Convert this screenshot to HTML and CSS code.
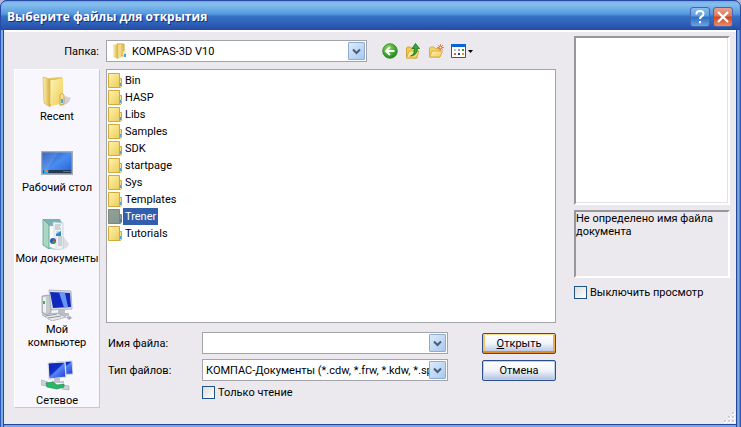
FILE: index.html
```html
<!DOCTYPE html>
<html lang="ru">
<head>
  <meta charset="UTF-8">
  <meta name="viewport" content="width=device-width, initial-scale=1.0">
  <title>Выберите файлы для открытия</title>
  <link rel="stylesheet" href="styles.css">
</head>
<body>
  <svg class="defs" width="0" height="0" aria-hidden="true">
    <defs>
      <linearGradient id="yellow" x1="0" y1="0" x2="1" y2="1">
        <stop offset="0" stop-color="#fdf4b0"/>
        <stop offset="1" stop-color="#eecb58"/>
      </linearGradient>
      <linearGradient id="gold" x1="0" y1="0" x2="1" y2="0">
        <stop offset="0" stop-color="#fff3b0"/>
        <stop offset="1" stop-color="#d9ae42"/>
      </linearGradient>
      <linearGradient id="grey" x1="0" y1="0" x2="1" y2="1">
        <stop offset="0" stop-color="#8f9f99"/>
        <stop offset="1" stop-color="#8b9a8e"/>
      </linearGradient>
      <linearGradient id="screen" x1="0" y1="0" x2="1" y2="1">
        <stop offset="0" stop-color="#1c4fb4"/>
        <stop offset=".5" stop-color="#4a8cf0"/>
        <stop offset="1" stop-color="#1f5dd0"/>
      </linearGradient>
      <linearGradient id="monitor" x1="0" y1="0" x2="1" y2="1">
        <stop offset="0" stop-color="#0a1fb0"/>
        <stop offset=".45" stop-color="#1230cc"/>
        <stop offset=".5" stop-color="#5a86f4"/>
        <stop offset="1" stop-color="#1a3ad2"/>
      </linearGradient>
      <radialGradient id="green" cx=".4" cy=".3" r=".7">
        <stop offset="0" stop-color="#8bd860"/>
        <stop offset="1" stop-color="#1f8a1c"/>
      </radialGradient>
      <symbol id="folder" viewBox="0 0 15 16">
        <path d="M.5.5h11v14H.5z" fill="url(#yellow)" stroke="#d2a93c"/>
        <path d="M11.5 5.5h2v8l-1 1h-1z" fill="#f6df8a" stroke="#cfa640"/>
        <path d="M12 10h1v3h-1z" fill="#4aa3d8"/>
      </symbol>
      <symbol id="folder-selected" viewBox="0 0 15 16">
        <path d="M.5.5h11v14H.5z" fill="url(#grey)" stroke="#7c8878"/>
        <path d="M11.5 5.5h2v8l-1 1h-1z" fill="#8795a0" stroke="#7b8474"/>
        <path d="M12 10h1v3h-1z" fill="#3b7fc4"/>
      </symbol>
      <symbol id="chevron" viewBox="0 0 9 7">
        <path d="M1 1.500l3.500 3.500L8 1.500" fill="none" stroke="#4a5b7c" stroke-width="2"/>
      </symbol>
    </defs>
  </svg>

  <main class="window">
    <header class="titlebar">
      <h1>Выберите файлы для открытия</h1>
      <button class="caption help" aria-label="Справка">
        <svg width="18" height="18" viewBox="0 0 18 18"><path d="M5.500 6.500V5.500Q5.500 3 9 3t3.500 2.700Q12.500 7.500 10.500 8.500 9 9.300 9 11M9 13v2.200" fill="none" stroke="#fff" stroke-width="2"/></svg>
      </button>
      <button class="caption close" aria-label="Закрыть">
        <svg width="18" height="18" viewBox="0 0 18 18"><path d="M4 4l10 10M14 4L4 14" fill="none" stroke="#fff" stroke-width="2.400"/></svg>
      </button>
    </header>

    <div class="content">
      <section class="browser">
        <div class="toolbar">
          <label class="folder-label" for="folder-select">Папка:</label>
          <div class="combo folder-combo">
            <svg class="combo-icon" width="13" height="16" viewBox="0 0 13 16">
              <path d="M4 1h7v12H4z" fill="#e9c65c" stroke="#cda63e"/>
              <path d="M0 1l5 1v14l-5-2z" fill="url(#gold)"/>
              <path d="M5 2l3-1v13l-3 2z" fill="#f2db86"/>
              <path d="M10 8h2.500v6H10z" fill="#f6e39c"/>
              <path d="M11 11h2v3h-2z" fill="#42a3dc"/>
            </svg>
            <select id="folder-select"><option>KOMPAS-3D V10</option></select>
            <span class="arrow"><svg width="9" height="7"><use href="#chevron"/></svg></span>
          </div>
          <div class="tools">
            <button class="tool" aria-label="Назад">
              <svg width="16" height="16" viewBox="0 0 16 16">
                <circle cx="8" cy="8" r="7.300" fill="url(#green)" stroke="#2b8a26" stroke-width=".8"/>
                <path d="M12.500 8H4.500M8 4L4 8l4 4" fill="none" stroke="#fff" stroke-width="2"/>
              </svg>
            </button>
            <button class="tool" aria-label="На уровень вверх">
              <svg width="16" height="16" viewBox="0 0 16 16">
                <path d="M1.500 15V5l1-1h3l1 1.500H12V15z" fill="#f0cc55" stroke="#d2a336"/>
                <path d="M1.500 15L4 8h10l-2.500 7z" fill="url(#yellow)" stroke="#d9ae42"/>
                <path d="M5.500 13C9 12 9.500 9 9.300 5.500H7L10.500.5l4 5h-2.300c.3 4-1.700 7-6.700 7.500z" fill="#35a935" stroke="#187018" stroke-width=".8"/>
              </svg>
            </button>
            <button class="tool" aria-label="Создать папку">
              <svg width="16" height="16" viewBox="0 0 16 16">
                <path d="M1.500 14V5l1-1h3.500l1 1.500h5V14z" fill="#f3d468" stroke="#d9ae42"/>
                <path d="M1.500 14L4 8h10.500L12 14z" fill="url(#yellow)" stroke="#d9ae42"/>
                <path d="M12.500 1v7M9 4.500h7M10 2l5 5M15 2l-5 5" stroke="#f08a50"/>
                <circle cx="12.500" cy="4.500" r="1.500" fill="#fff0a0" stroke="#e8582c"/>
              </svg>
            </button>
            <button class="tool views" aria-label="Вид">
              <svg width="23" height="16" viewBox="0 0 23 16">
                <path d="M.5 1.500h14v13H.5z" fill="#fff" stroke="#0a5ad0"/>
                <path d="M0 1h15v3H0z" fill="#0a62dc"/>
                <path d="M3 6h2v2H3z" fill="#b4c4dc"/>
                <path d="M7 6h2v2H7z" fill="#8898c8"/>
                <path d="M11 6h2v2h-2z" fill="#3a9a3a"/>
                <path d="M3 10h2v2H3z" fill="#d86848"/>
                <path d="M7 10h2v2H7z" fill="#283c98"/>
                <path d="M11 10h2v2h-2z" fill="#d0a020"/>
                <path d="M17 7h5l-2.500 3z" fill="#000"/>
              </svg>
            </button>
          </div>
        </div>

        <div class="columns">
          <nav class="places">
            <button class="place">
              <svg width="32" height="32" viewBox="0 0 32 32">
                <path d="M18 30q9 0 12-8l-6-2z" fill="#b8b8be" opacity=".6"/>
                <path d="M9 2l12-1v26l-12 3z" fill="#e5c35a"/>
                <path d="M9 4h10v24H9z" fill="#f8eda8"/>
                <path d="M2 1l7 2v28l-6-4z" fill="url(#gold)" stroke="#d3ad4a" stroke-width=".6"/>
                <path d="M10 5l12-3v25l-12 3z" fill="url(#yellow)"/>
                <path d="M19 19l2-2 2 2v9l-4 1z" fill="#f4df93" stroke="#c8a03a" stroke-width=".8"/>
                <path d="M20 23h2v4h-2z" fill="#50a8d8"/>
              </svg>
              <span>Recent</span>
            </button>
            <button class="place">
              <svg width="32" height="32" viewBox="0 0 32 32">
                <path d="M.7 4.700h30.600v22.600H.7z" fill="url(#screen)" stroke="#a6aebc" stroke-width="1.400"/>
                <path d="M2 6h15L6 23H2z" fill="#fff" opacity=".12"/>
                <path d="M2 23h28v3H2z" fill="#25384f"/>
                <circle cx="5" cy="24" r="2.500" fill="#29a9e8"/>
                <path d="M4 22h2v2H4z" fill="#f48028"/><path d="M5 24h2v1H5z" fill="#7cc840"/>
                <path d="M22 24h8v1h-8z" fill="#5a6d80"/>
              </svg>
              <span>Рабочий стол</span>
            </button>
            <button class="place">
              <svg width="32" height="32" viewBox="0 0 32 32">
                <path d="M20 31q7 0 8-5l-6-8z" fill="#c4c4cc" opacity=".5"/>
                <path d="M2 1h17l2 4v24l-12 2-7-4z" fill="#7bb3b4"/>
                <path d="M12 4l10 1v26l-10 1z" fill="#eef2f5" stroke="#b7c5cd" stroke-width=".6"/>
                <path d="M14 7h6M14 9h5M14 11h6M17 19h4M17 21h4M17 23h4M17 25h4M17 27h4" stroke="#a5b3bd"/>
                <path d="M15 13h5v5h-5z" fill="#2c8cc0"/><path d="M15 13h5l-5 3z" fill="#c4dce8"/>
                <path d="M8 8h5v10l2 2v11l-7-2z" fill="#f9fafc" stroke="#c0cad0" stroke-width=".5"/>
                <circle cx="12" cy="23" r="3" fill="#2854b4"/>
                <path d="M12 23h3a3 3 0 0 1-5 2z" fill="#30a050"/><path d="M12 20v3h3z" fill="#d04848"/>
                <path d="M2 1l6 6v24l-6-4z" fill="#a8d8c0" stroke="#5f9c9a" stroke-width=".8"/>
              </svg>
              <span>Мои документы</span>
            </button>
            <button class="place">
              <svg width="32" height="32" viewBox="0 0 32 32">
                <path d="M1 7l6-1 3 2v16l-4 2-5-2z" fill="#c6cbd0" stroke="#8c9298" stroke-width=".7"/>
                <path d="M2 8l3 .5V24l-3-1z" fill="#eef0f2"/><path d="M2 12h2v3H2z" fill="#42b83c"/>
                <path d="M8 1l22 1 1 18-21 1z" fill="#d9dce0" stroke="#9ba2aa" stroke-width=".7"/>
                <path d="M9 3l20 1 1 14-18 1z" fill="#1028bc"/>
                <path d="M18 3.500l6 .3 3 14.400-4 .3z" fill="#6c94f4"/>
                <path d="M17 21h7v3h4v3H15v-3h2z" fill="#b9bec6"/>
                <path d="M1 26l15-2 9 4-14 4z" fill="#e8eaec" stroke="#9ca2a8" stroke-width=".7"/>
                <path d="M4 27l12-2M7 29l13-2" stroke="#8e959e"/>
                <path d="M25 28l4-1 2 2-3 2z" fill="#a7adb5"/>
              </svg>
              <span>Мой<br>компьютер</span>
            </button>
            <button class="place">
              <svg width="32" height="32" viewBox="0 0 32 32">
                <path d="M15 2l16-1 1 13-15 1z" fill="url(#monitor)" stroke="#d5d9df"/>
                <path d="M7 3l17-1 1 15-17 2z" fill="url(#monitor)" stroke="#dfe3e8" stroke-width="1.200"/>
                <path d="M13 18h6v3h4v2H11v-2h2z" fill="#c0c5cc"/>
                <path d="M0 20l7 2-1 4-6-1zM21 25l7 1v4l-7-1z" fill="#ccd3d4" stroke="#99a3a5" stroke-width=".6"/>
                <path d="M5 23l7-1 4 3 7-1v3l-7 2-10-2z" fill="#28b968" stroke="#168548" stroke-width=".6"/>
              </svg>
              <span>Сетевое</span>
            </button>
          </nav>

          <div class="files">
            <ul class="file-list">
              <li><svg class="file-icon"><use href="#folder"/></svg><span>Bin</span></li>
              <li><svg class="file-icon"><use href="#folder"/></svg><span>HASP</span></li>
              <li><svg class="file-icon"><use href="#folder"/></svg><span>Libs</span></li>
              <li><svg class="file-icon"><use href="#folder"/></svg><span>Samples</span></li>
              <li><svg class="file-icon"><use href="#folder"/></svg><span>SDK</span></li>
              <li><svg class="file-icon"><use href="#folder"/></svg><span>startpage</span></li>
              <li><svg class="file-icon"><use href="#folder"/></svg><span>Sys</span></li>
              <li><svg class="file-icon"><use href="#folder"/></svg><span>Templates</span></li>
              <li class="selected"><svg class="file-icon"><use href="#folder-selected"/></svg><span>Trener</span></li>
              <li><svg class="file-icon"><use href="#folder"/></svg><span>Tutorials</span></li>
            </ul>

            <form class="fields">
              <div class="field">
                <label for="file-name">Имя файла:</label>
                <div class="combo">
                  <input type="text" id="file-name">
                  <button type="button" class="arrow" aria-label="Показать список"><svg width="9" height="7"><use href="#chevron"/></svg></button>
                </div>
                <button type="submit" class="action default"><u>О</u>ткрыть</button>
              </div>
              <div class="field">
                <label for="file-type">Тип файлов:</label>
                <div class="combo">
                  <select id="file-type"><option>КОМПАС-Документы (*.cdw, *.frw, *.kdw, *.spw)</option></select>
                  <span class="arrow"><svg width="9" height="7"><use href="#chevron"/></svg></span>
                </div>
                <button type="button" class="action">Отмена</button>
              </div>
              <label class="check readonly"><input type="checkbox">Только чтение</label>
            </form>
          </div>
        </div>
      </section>

      <aside class="preview">
        <div class="preview-image"></div>
        <p class="preview-text">Не определено имя файла документа</p>
        <label class="check"><input type="checkbox">Выключить просмотр</label>
      </aside>

      <svg class="grip" width="12" height="12" viewBox="0 0 12 12">
        <path d="M9 1h3v3H9zM5 5h3v3H5zM9 5h3v3H9zM1 9h3v3H1zM5 9h3v3H5zM9 9h3v3H9z" fill="#fff"/>
        <path d="M9 1h2v2H9zM5 5h2v2H5zM9 5h2v2H9zM1 9h2v2H1zM5 9h2v2H5zM9 9h2v2H9z" fill="#d0ced4"/>
      </svg>
    </div>
  </main>
</body>
</html>
```
FILE: styles.css
```css
* {
  box-sizing: border-box;
}

body {
  margin: 0;
  background: #b4b4d8;
  color: #000;
  font-family: Roboto, "Liberation Sans", sans-serif;
  font-size: 11px;
  line-height: 13px;
}

button,
input,
select {
  margin: 0;
  padding: 0;
  border: none;
  background: none;
  color: inherit;
  font: inherit;
}

svg {
  display: block;
  flex: none;
}

.defs {
  position: absolute;
}

.window {
  display: flex;
  flex-direction: column;
  min-height: 100vh;
  border-radius: 7px 7px 0 0;
  background: linear-gradient(to right, #2c57b4 0, #2c57b4 1px, #7aaae4 1px, #7aaae4 3px, #24459c 3px, #24459c calc(100% - 4px), #5f93da calc(100% - 4px), #84b4e6 calc(100% - 2px), #2c57b4 calc(100% - 1px));
  overflow: hidden;
}

.titlebar {
  display: flex;
  align-items: center;
  gap: 3px;
  height: 30px;
  padding: 3px 7px 0 6px;
  border: 1px solid #2849a4;
  border-radius: 7px 7px 0 0;
  background: linear-gradient(#6faae6, #87c0ee 3px, #5a9ce2 12px, #4a8cda 14px, #3573c6 15px, #2c5cb4 24px, #2a4ea8);
}

.titlebar h1 {
  flex: 1;
  margin: 0;
  color: #fff;
  font-family: "Open Sans", sans-serif;
  font-size: 12px;
  font-weight: bold;
  text-shadow: 1px 1px #16307c;
}

.caption {
  display: flex;
  align-items: center;
  justify-content: center;
  width: 20px;
  height: 20px;
  border: 1px solid #4265b4;
  border-radius: 3px;
}

.help {
  background: linear-gradient(#8dbcec, #5c9ce0 45%, #2d6cc0 50%, #66a4e4);
}

.close {
  background: linear-gradient(#e8a08c, #dc7858 45%, #d0421c 50%, #ec8c64);
}

.content {
  position: relative;
  display: flex;
  flex: 1;
  gap: 18px;
  margin: 0 5px 3px 4px;
  padding: 4px 6px 16px 10px;
  border-top: 2px solid #fff;
  background: #ebe9ee;
  box-shadow: 0 1px #24459c, 0 3px #75a9e4;
}

.browser {
  display: flex;
  flex: 1;
  flex-direction: column;
  gap: 7px;
  min-width: 0;
  padding-top: 4px;
}

.toolbar {
  display: flex;
  align-items: center;
}

.folder-label {
  width: 92px;
  padding-right: 7px;
  text-align: right;
}

.combo {
  display: flex;
  align-items: center;
  height: 22px;
  min-width: 0;
  padding: 1px;
  border: 1px solid #a3a3aa;
  background: #fff;
}

.folder-combo {
  width: 261px;
}

.combo-icon {
  margin-left: 5px;
}

.combo input,
.combo select {
  flex: 1;
  width: 0;
  min-width: 0;
  height: 100%;
  padding-left: 2px;
  appearance: none;
  outline: none;
  text-overflow: clip;
}

.folder-combo select {
  padding-left: 6px;
}

.arrow {
  display: flex;
  flex: none;
  align-items: center;
  justify-content: center;
  width: 17px;
  height: 18px;
  border: 1px solid #8cacd4;
  border-radius: 1px;
  background: linear-gradient(135deg, #dcebfa, #a8c8ee);
}

.tools {
  display: flex;
  gap: 7px;
  margin-left: 15px;
}

.columns {
  display: flex;
  flex: 1;
  gap: 6px;
}

.places {
  width: 86px;
  height: 339px;
  padding-top: 6px;
  border: 1px solid #fff;
  border-right-color: #c9c7cd;
  border-bottom-color: #c9c7cd;
  background: #f8f7fd;
  overflow: hidden;
}

.place {
  display: flex;
  flex-direction: column;
  align-items: center;
  gap: 2px;
  width: 100%;
  height: 71px;
}

.place span {
  max-width: 100%;
}

.files {
  flex: 1;
  min-width: 0;
}

.file-list {
  height: 254px;
  margin: 0 0 9px;
  padding: 2px 1px;
  border: 1px solid #a3a3aa;
  background: #fff;
  list-style: none;
}

.file-list li {
  display: flex;
  align-items: center;
  height: 17px;
}

.file-icon {
  width: 15px;
  height: 16px;
}

.file-list span {
  padding: 2px;
}

.selected span {
  background: #315fac;
  color: #fff;
}

.field {
  display: flex;
  align-items: center;
  margin-bottom: 5px;
}

.field label {
  width: 96px;
  padding-left: 2px;
}

.field .combo {
  flex: 1;
  margin-right: 34px;
}

.action {
  width: 74px;
  height: 21px;
  border: 1px solid #2b4f8c;
  border-radius: 2px;
  background: linear-gradient(#fff, #f0f4fa 50%, #b0c0e0);
  box-shadow: inset 0 0 0 1px #bccfea;
}

.default {
  box-shadow: inset 0 1px #fbd98c, inset 0 -2px #e08a28, inset 2px 0 #f5c468, inset -2px 0 #f0ac48;
}

.check {
  display: flex;
  align-items: center;
  gap: 3px;
}

.readonly {
  padding-left: 96px;
}

.check input {
  width: 13px;
  height: 13px;
  border: 1px solid #1f5285;
  background: linear-gradient(135deg, #dcdcd8, #fff);
  appearance: none;
}

.check input:checked {
  background: #21a121;
}

.preview {
  width: 156px;
}

.preview-image,
.preview-text {
  border: 2px solid;
  border-color: #96969c #fff #fff #96969c;
}

.preview-image {
  height: 169px;
  background: #fff;
  box-shadow: inset -1px -1px #e2e2e6;
}

.preview-text {
  height: 68px;
  margin: 5px 0 8px;
}

.grip {
  position: absolute;
  right: 1px;
  bottom: 1px;
}
```
